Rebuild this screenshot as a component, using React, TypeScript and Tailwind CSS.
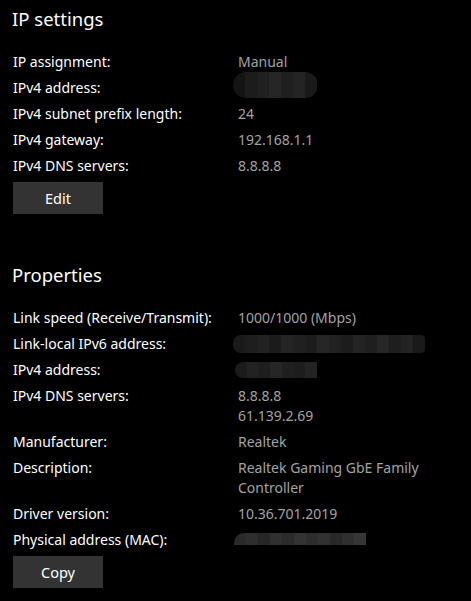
import type { ReactNode } from 'react'

const font = { fontFamily: '"Noto Sans", "Open Sans", sans-serif' }

function Blur({ cells, h, round }: { cells: string[]; h: string; round: string }) {
  return (
    <div className={`flex overflow-hidden ${h} ${round}`}>
      {cells.map((c, i) => (
        <div key={i} className="h-full w-[12px]" style={{ backgroundColor: c }} />
      ))}
    </div>
  )
}

function Row({ label, children }: { label: string; children: ReactNode }) {
  return (
    <>
      <div className="text-white leading-5">{label}</div>
      <div className="text-[#a3a3a3] leading-5">{children}</div>
    </>
  )
}

function Button({ children }: { children: ReactNode }) {
  return (
    <button className="mt-[6px] ml-px h-8 w-[90px] bg-[#333333] text-white text-[14.5px] leading-5">
      {children}
    </button>
  )
}

export default function App() {
  return (
    <div className="h-[601px] w-[471px] bg-black pl-3 pr-3 pt-[5px] text-[14px]" style={font}>
      <h2 className="text-[18.5px] leading-7 text-white">IP settings</h2>
      <div className="mt-[19px] grid grid-cols-[225px_1fr] gap-y-[6px] pl-px">
        <Row label="IP assignment:">Manual</Row>
        <Row label="IPv4 address:">
          <div className="-ml-[5px] -mt-[6px] h-5">
            <Blur
              h="h-[26px]"
              round="rounded-[13px] w-[85px]"
              cells={['#141414', '#1c1c1c', '#202020', '#262626', '#1f1f1f', '#242424', '#1a1a1a']}
            />
          </div>
        </Row>
        <Row label="IPv4 subnet prefix length:">24</Row>
        <Row label="IPv4 gateway:">192.168.1.1</Row>
        <Row label="IPv4 DNS servers:">8.8.8.8</Row>
      </div>
      <Button>Edit</Button>

      <h2 className="mt-[47px] text-[18.5px] leading-7 text-white">Properties</h2>
      <div className="mt-[19px] grid grid-cols-[225px_1fr] gap-y-[6px] pl-px">
        <Row label="Link speed (Receive/Transmit):">1000/1000 (Mbps)</Row>
        <Row label="Link-local IPv6 address:">
          <div className="-ml-[5px] mt-px">
            <Blur
              h="h-[18px]"
              round="rounded-l-[8px] rounded-r-[4px] w-[192px]"
              cells={[
                '#1a1a1a', '#1e1e1e', '#222222', '#1b1b1b', '#252525', '#202020', '#1d1d1d', '#262626',
                '#212121', '#1c1c1c', '#242424', '#1f1f1f', '#272727', '#1e1e1e', '#232323', '#1a1a1a',
              ]}
            />
          </div>
        </Row>
        <Row label="IPv4 address:">
          <div className="-ml-[3px] mt-[2px]">
            <Blur
              h="h-[16px]"
              round="rounded-l-[8px] w-[82px]"
              cells={['#1b1b1b', '#222222', '#1e1e1e', '#262626', '#202020', '#1d1d1d', '#232323']}
            />
          </div>
        </Row>
        <Row label="IPv4 DNS servers:">
          <div>8.8.8.8</div>
          <div>61.139.2.69</div>
        </Row>
        <Row label="Manufacturer:">Realtek</Row>
        <Row label="Description:">
          Realtek Gaming GbE Family
          <br />
          Controller
        </Row>
        <Row label="Driver version:">10.36.701.2019</Row>
        <Row label="Physical address (MAC):">
          <div className="-ml-[4px] mt-[3px]">
            <Blur
              h="h-[12px]"
              round="rounded-tl-[10px] w-[132px]"
              cells={[
                '#2a2a2a', '#2e2e2e', '#262626', '#303030', '#2b2b2b', '#333333', '#2d2d2d', '#313131',
                '#282828', '#2f2f2f', '#363636',
              ]}
            />
          </div>
        </Row>
      </div>
      <Button>Copy</Button>
    </div>
  )
}
